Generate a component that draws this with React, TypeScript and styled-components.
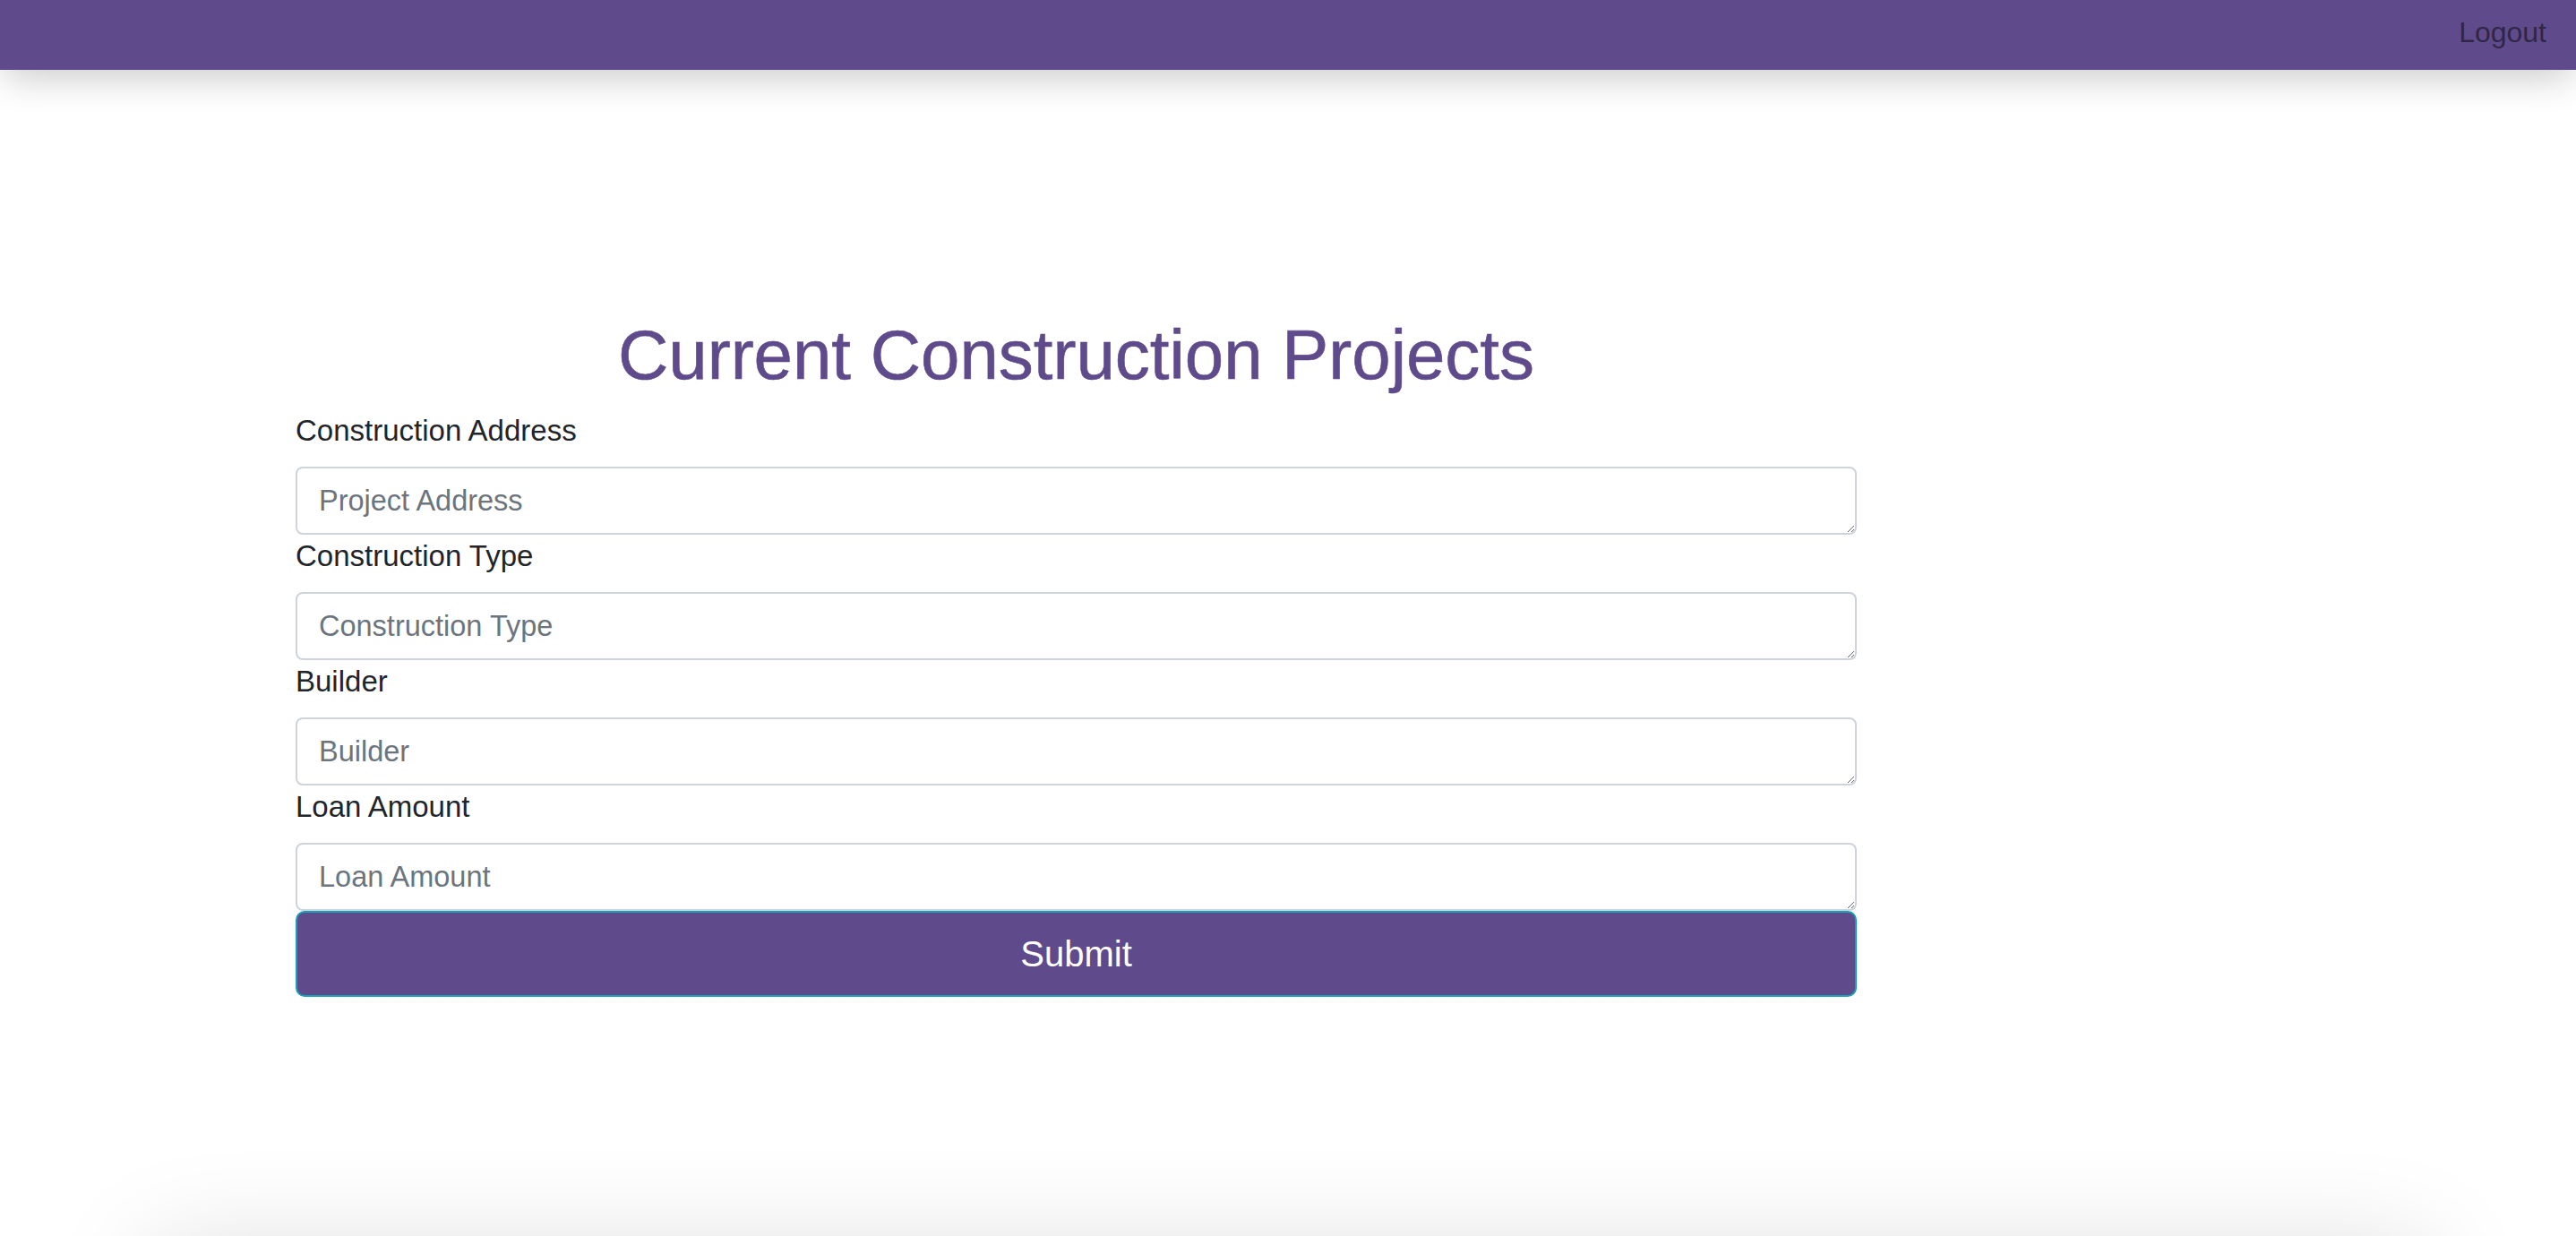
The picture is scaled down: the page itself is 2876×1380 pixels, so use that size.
import * as React from 'react'
import styled, { createGlobalStyle } from 'styled-components'

const GlobalStyle = createGlobalStyle`
    body {
        margin: 0;
        background: #ffffff;
        font-family: "Liberation Sans", Arial, Helvetica, sans-serif;
        color: #212529;
    }
    * {
        box-sizing: border-box;
    }
`

const Navbar = styled.nav`
    height: 78px;
    background: #5f4b8b;
    display: flex;
    align-items: flex-start;
    justify-content: flex-end;
    padding: 12px 33px 0 0;
    box-shadow: 0 14px 40px -4px rgba(0, 0, 0, 0.2);
    position: relative;
    z-index: 1;
`

const NavLink = styled.a`
    font-size: 32px;
    line-height: 48px;
    color: rgba(0, 0, 0, 0.5);
    text-decoration: none;
    cursor: pointer;
`

const Container = styled.main`
    width: 1743px;
    margin: 271px 0 0 330px;
`

const Title = styled.h1`
    margin: 0 0 14px;
    font-size: 78px;
    line-height: 94px;
    font-weight: 400;
    text-align: center;
    color: #5f4b8b;
    -webkit-text-stroke: 0.6px #5f4b8b;
`

const Form = styled.form`
    display: flex;
    flex-direction: column;
`

const Label = styled.label`
    display: block;
    font-size: 33px;
    line-height: 48px;
    margin-bottom: 16px;
    color: #212529;
`

const Field = styled.textarea`
    display: block;
    width: 100%;
    height: 76px;
    padding: 12px 24px;
    font-family: inherit;
    font-size: 32.5px;
    line-height: 48px;
    color: #495057;
    background: #fff;
    border: 2px solid #ced4da;
    border-radius: 8px;
    resize: vertical;
    outline: none;

    &::placeholder {
        color: #6c757d;
    }
`

const SubmitButton = styled.button`
    width: 100%;
    height: 96px;
    padding: 16px 32px;
    font-family: inherit;
    font-size: 40px;
    line-height: 60px;
    color: #fff;
    background: #5f4b8b;
    border: 2px solid #17a2b8;
    border-radius: 10px;
    cursor: pointer;
`

const Footer = styled.footer`
    height: 300px;
    margin: 285px 166px 0 170px;
    background: #fff;
    box-shadow: 0 0 120px rgba(0, 0, 0, 0.15);
`

const fields = [
    { label: 'Construction Address', placeholder: 'Project Address' },
    { label: 'Construction Type', placeholder: 'Construction Type' },
    { label: 'Builder', placeholder: 'Builder' },
    { label: 'Loan Amount', placeholder: 'Loan Amount' },
]

const FormField: React.FC<{ label: string; placeholder: string }> = ({ label, placeholder }) => {
    const id = label.toLowerCase().replace(/\s+/g, '-')
    return (
        <div>
            <Label htmlFor={id}>{label}</Label>
            <Field id={id} rows={1} placeholder={placeholder} />
        </div>
    )
}

export default function App() {
    return (
        <>
            <GlobalStyle />
            <Navbar>
                <NavLink>Logout</NavLink>
            </Navbar>
            <Container>
                <Title>Current Construction Projects</Title>
                <Form onSubmit={(e) => e.preventDefault()}>
                    {fields.map((f) => (
                        <FormField key={f.label} label={f.label} placeholder={f.placeholder} />
                    ))}
                    <SubmitButton type="submit">Submit</SubmitButton>
                </Form>
            </Container>
            <Footer />
        </>
    )
}
